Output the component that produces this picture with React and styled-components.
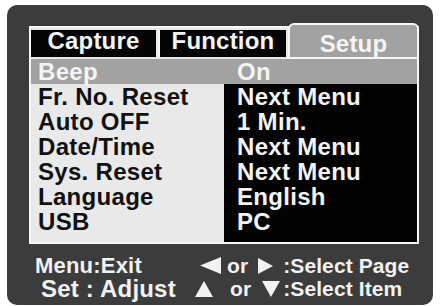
import React from "react";
import styled, { createGlobalStyle } from "styled-components";

const Global = createGlobalStyle`
  html, body { margin: 0; padding: 0; background: #ffffff; }
  body { font-family: "Liberation Sans", Arial, sans-serif; }
`;

const Frame = styled.div`
  margin: 5px 0 0 7px;
  width: 426px;
  height: 300px;
  box-sizing: border-box;
  padding: 21px 0 0 22px;
  background: #3c3c3c;
  border-radius: 10px;
  font-family: "Liberation Sans", Arial, sans-serif;
  font-weight: bold;
`;

const Panel = styled.div`
  width: 390px;
  box-sizing: border-box;
  border: 2px solid #f7f7f7;
  background: #e9e9e9;
  display: flex;
  flex-direction: column;
`;

const TabRow = styled.div`
  display: flex;
  align-items: flex-end;
  height: 29px;
  margin-top: 2px;
`;

const Tab = styled.div`
  box-sizing: border-box;
  width: ${(p) => p.$w}px;
  height: 27px;
  margin-bottom: 2px;
  margin-left: ${(p) => p.$ml || 0}px;
  border-left: ${(p) => (p.$edge ? "2px solid #f7f7f7" : "none")};
  background: #050505;
  color: #f4f4f4;
  font-size: 24px;
  line-height: 22px;
  text-align: center;
  letter-spacing: 0.2px;
`;

const ActiveTab = styled.div`
  box-sizing: border-box;
  width: 131px;
  height: 36px;
  margin-left: 2px;
  margin-right: -2px;
  border: 2px solid #f7f7f7;
  border-radius: 6px 6px 0 0;
  background: #a2a2a2;
  color: #f4f4f4;
  font-size: 24px;
  line-height: 24px;
  padding-top: 7px;
  text-align: center;
  letter-spacing: 0.2px;
`;

const HighlightRow = styled.div`
  display: flex;
  height: 25px;
  background: #a2a2a2;
`;

const Rest = styled.div`
  display: flex;
`;

const Column = styled.div`
  width: 193px;
  box-sizing: border-box;
  display: flex;
  flex-direction: column;
  padding: 0 0 8px ${(p) => (p.$value ? 13 : 7)}px;
  background: ${(p) => (p.$value ? "#030303" : "transparent")};
`;

const Cell = styled.div`
  box-sizing: border-box;
  width: 193px;
  padding-left: ${(p) => (p.$value ? 13 : 7)}px;
`;

const Text = styled.div`
  height: 25px;
  font-size: 24px;
  line-height: 25px;
  letter-spacing: 0.3px;
  white-space: nowrap;
  color: ${(p) => (p.$light ? "#f4f4f4" : "#111111")};
`;

const Footer = styled.div`
  display: flex;
  flex-direction: column;
  margin-top: 10px;
  margin-left: 6px;
`;

const FooterLine = styled.div`
  display: flex;
  align-items: center;
  height: ${(p) => p.$h}px;
  color: #f2f2f2;
  white-space: nowrap;
`;

const FooterLeft = styled.div`
  box-sizing: border-box;
  width: ${(p) => p.$w}px;
  padding-left: ${(p) => p.$pl || 0}px;
  font-size: ${(p) => p.$fs}px;
  line-height: 24px;
  letter-spacing: 0.2px;
`;

const HintWord = styled.span`
  font-size: 21px;
  line-height: 24px;
  margin-left: ${(p) => p.$ml || 0}px;
  letter-spacing: 0.1px;
`;

const Tri = styled.svg`
  display: block;
  flex: none;
  margin-left: ${(p) => p.$ml || 0}px;
`;

const Arrow = ({ dir, w, h, ml }) => {
  const pts = {
    left: `0,${h / 2} ${w},0 ${w},${h}`,
    right: `0,0 ${w},${h / 2} 0,${h}`,
    up: `${w / 2},0 ${w},${h} 0,${h}`,
    down: `0,0 ${w},0 ${w / 2},${h}`,
  }[dir];
  return (
    <Tri $ml={ml} width={w} height={h} viewBox={`0 0 ${w} ${h}`}>
      <polygon points={pts} fill="#f2f2f2" />
    </Tri>
  );
};

const rows = [
  ["Fr. No. Reset", "Next Menu"],
  ["Auto OFF", "1 Min."],
  ["Date/Time", "Next Menu"],
  ["Sys. Reset", "Next Menu"],
  ["Language", "English"],
  ["USB", "PC"],
];

export default function App() {
  return (
    <>
      <Global />
      <Frame>
        <Panel>
          <TabRow>
            <Tab $w={125}>Capture</Tab>
            <Tab $w={128} $ml={2} $edge>
              Function
            </Tab>
            <ActiveTab>Setup</ActiveTab>
          </TabRow>
          <HighlightRow>
            <Cell>
              <Text $light>Beep</Text>
            </Cell>
            <Cell $value>
              <Text $light>On</Text>
            </Cell>
          </HighlightRow>
          <Rest>
            <Column>
              {rows.map(([l]) => (
                <Text key={l}>{l}</Text>
              ))}
            </Column>
            <Column $value>
              {rows.map(([l, v]) => (
                <Text key={l} $light>
                  {v}
                </Text>
              ))}
            </Column>
          </Rest>
        </Panel>
        <Footer>
          <FooterLine $h={23}>
            <FooterLeft $w={165} $fs={22}>
              Menu:Exit
            </FooterLeft>
            <Arrow dir="left" w={21} h={17} />
            <HintWord $ml={6}>or</HintWord>
            <Arrow dir="right" w={15} h={16} ml={10} />
            <HintWord $ml={10}>:Select Page</HintWord>
          </FooterLine>
          <FooterLine $h={24}>
            <FooterLeft $w={160} $pl={6} $fs={24}>
              Set : Adjust
            </FooterLeft>
            <Arrow dir="up" w={18} h={16} />
            <HintWord $ml={17}>or</HintWord>
            <Arrow dir="down" w={18} h={16} ml={11} />
            <HintWord $ml={3}>:Select Item</HintWord>
          </FooterLine>
        </Footer>
      </Frame>
    </>
  );
}
